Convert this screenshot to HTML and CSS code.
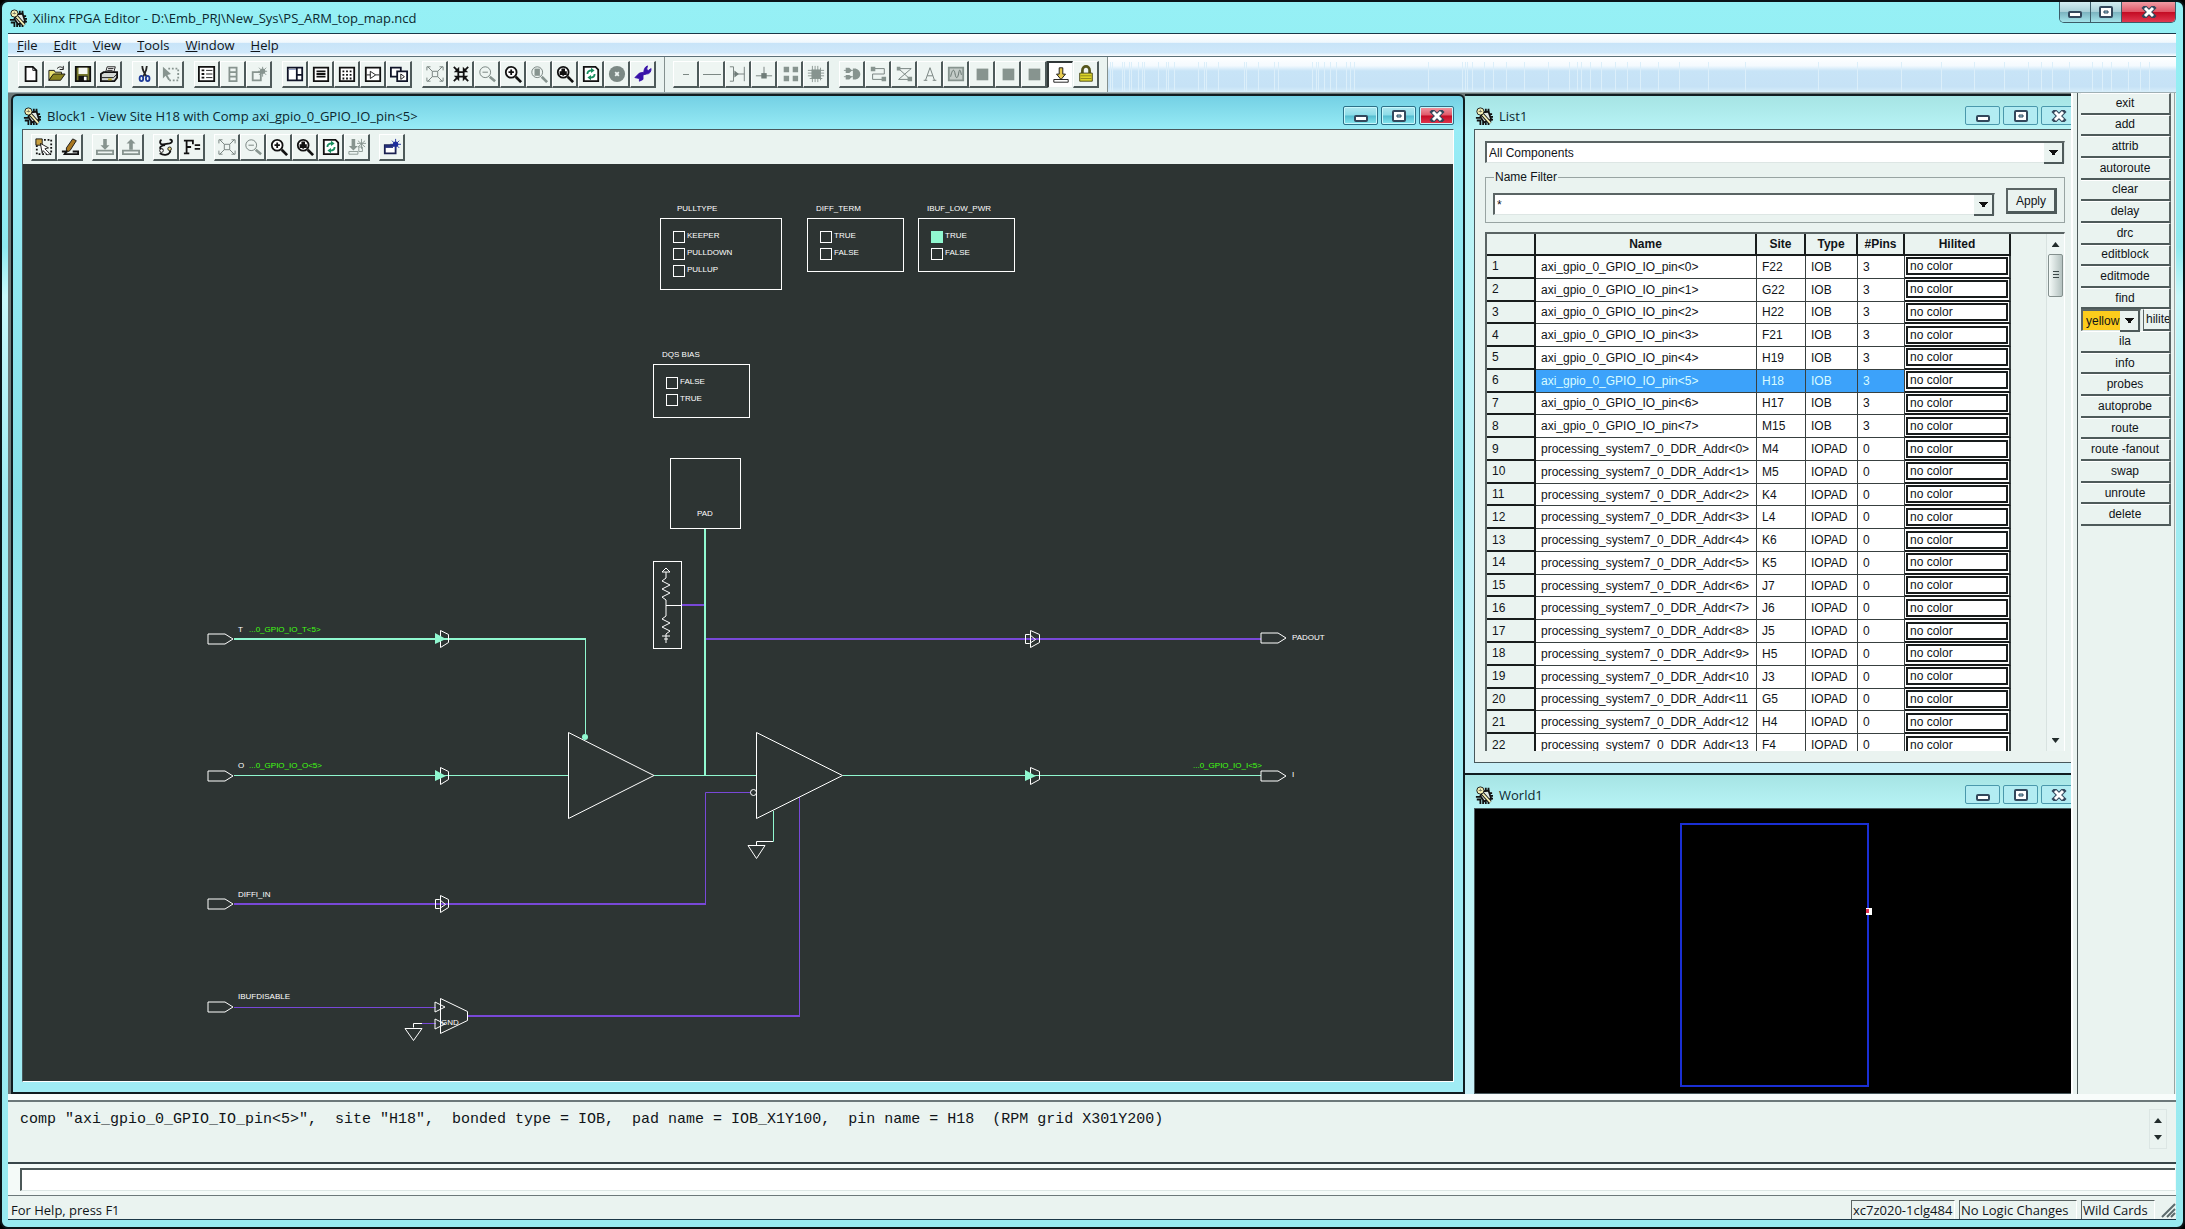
FILE: index.html
```html
<!DOCTYPE html>
<html lang="en">

<head>
    <meta charset="UTF-8">
    <meta name="viewport" content="width=device-width, initial-scale=1.0">
    <title>Xilinx FPGA Editor</title>
    <link rel="stylesheet" href="styles.css">
</head>

<body>

    <!-- Icon set -->
    <svg class="icon-set" aria-hidden="true">
        <symbol id="i-app" viewBox="0 0 20 20">
            <path d="M9 6l6-1 3 9-8 3-4-6z" fill="#dfe8e4" stroke="#111" stroke-width="2"/>
            <path d="M6 20v-4M9 20v-4M12 20v-3M15 20v-4M20 14h-3M20 11h-3M19 8h-3M12 2v4M15 2v4M1 12h5M2 15h5" stroke="#111" fill="none" stroke-width="2"/>
            <path d="M8 8l9 10" stroke="#111" stroke-width="4"/>
            <path d="M8 8l9 10" stroke="#f6f0b4" stroke-width="2"/>
            <circle cx="6" cy="5" r="4" fill="#f6f0b4" stroke="#111"/>
            <path d="M4 5h4M6 3v3" stroke="#776"/>
        </symbol>
        <symbol id="i-new" viewBox="0 0 20 20"><path d="M4 2h8l4 4v12H4z" fill="#fff" stroke="#111" stroke-width="2"/><path d="M12 2v4h4" fill="none" stroke="#111"/></symbol>
        <symbol id="i-open" viewBox="0 0 20 20"><path d="M1 6h6l1 2h7v3H6l-5 6z" fill="#e8e070" stroke="#111"/><path d="M1 17l5-7h13l-5 7z" fill="#8a8420" stroke="#111"/><path d="M10 4c3-3 5-2 7 0M17 1v4h-4" fill="none" stroke="#111"/></symbol>
        <symbol id="i-save" viewBox="0 0 20 20"><path d="M2 2h16v16H2z" fill="#77782c" stroke="#111" stroke-width="2"/><path d="M5 3h10v7H5z" fill="#f4f6f0"/><path d="M5 12h10v6H5z" fill="#111"/><path d="M11 13h3v4h-3z" fill="#fff"/></symbol>
        <symbol id="i-print" viewBox="0 0 20 20"><path d="M6 9l2-7h9l-2 7z" fill="#fff" stroke="#111"/><path d="M9 4h6M8 6h6" stroke="#111"/><path d="M1 10l3-2h15v6l-3 4H1z" fill="#d4d8d4" stroke="#111" stroke-width="2"/><path d="M2 14h13M15 14l4-4" stroke="#111"/><path d="M9 16h4" stroke="#b8a820" stroke-width="2"/></symbol>
        <symbol id="i-cut" viewBox="0 0 20 20"><path d="M7 1c0 5 2 8 5 12M12 1c0 5-2 8-4 12" fill="none" stroke="#222" stroke-width="2"/><ellipse cx="6" cy="15" rx="2" ry="3" fill="none" stroke="#1c3a98" stroke-width="2"/><ellipse cx="13" cy="15" rx="2" ry="3" fill="none" stroke="#1c3a98" stroke-width="2"/></symbol>
        <symbol id="i-pick" viewBox="0 0 20 20"><path d="M7 4h11v13H7" fill="none" stroke="#87948f" stroke-width="2" stroke-dasharray="2 2"/><path d="M1 2l9 8-4 1 3 5-2 1-3-5-3 3z" fill="#87948f"/></symbol>
        <symbol id="i-props" viewBox="0 0 20 20"><path d="M1 2h17v16H1z" fill="#fff" stroke="#111" stroke-width="2"/><path d="M9 6h7M9 10h7M9 14h7" stroke="#111"/><path d="M4 5h3v2H4zM4 9h3v2H4zM4 13h3v2H4z" fill="#111"/></symbol>
        <symbol id="i-stack" viewBox="0 0 20 20"><path d="M6 3h8v5H6zM6 8h8v5H6zM6 13h8v5H6z" fill="none" stroke="#87948f" stroke-width="2"/></symbol>
        <symbol id="i-sparkg" viewBox="0 0 20 20"><path d="M3 8h9v9H3z" fill="none" stroke="#87948f" stroke-width="2"/><path d="M14 2v11M9 7h10M10 3l8 8M18 3l-8 8" stroke="#87948f"/><circle cx="14" cy="7" r="3" fill="#87948f"/></symbol>
        <symbol id="i-spark" viewBox="0 0 20 20"><path d="M2 8h12v9H2z" fill="#fff" stroke="#1a2050" stroke-width="2"/><path d="M2 8h9v3H2z" fill="#24307c"/><path d="M14 1v12M8 7h12M10 3l8 8M18 3l-8 8" stroke="#1c2c9c"/><circle cx="14" cy="7" r="3" fill="#1c2c9c"/></symbol>
        <symbol id="i-pane" viewBox="0 0 20 20"><path d="M2 3h16v14H2z" fill="#fff" stroke="#101428" stroke-width="2"/><path d="M12 3v14M12 11h6" stroke="#101428" stroke-width="2"/><path d="M3 5h8" stroke="#8c9cc4"/></symbol>
        <symbol id="i-lines" viewBox="0 0 20 20"><path d="M2 3h16v15H2z" fill="#fff" stroke="#111" stroke-width="2"/><path d="M5 7h10M5 10h10M5 13h10" stroke="#111" stroke-width="2"/></symbol>
        <symbol id="i-dots" viewBox="0 0 20 20"><path d="M2 3h16v15H2z" fill="#fff" stroke="#111" stroke-width="2"/><path d="M5 7h11M5 11h11M5 15h11" stroke="#111" stroke-width="2" stroke-dasharray="2 2"/></symbol>
        <symbol id="i-gate" viewBox="0 0 20 20"><path d="M2 3h16v15H2z" fill="#fff" stroke="#111" stroke-width="2"/><path d="M7 7l6 4-6 4zM3 11h4M13 11h4" fill="none" stroke="#111"/></symbol>
        <symbol id="i-wins" viewBox="0 0 20 20"><path d="M1 3h11v10H1z" fill="#fff" stroke="#101428" stroke-width="2"/><path d="M8 7h11v11H8z" fill="#fff" stroke="#101428" stroke-width="2"/><path d="M12 10l4 3-4 3z" fill="none" stroke="#111"/></symbol>
        <symbol id="i-fit" viewBox="0 0 20 20"><path d="M7 7h6v6H7zM7 7L2 2M13 7l5-5M7 13l-5 5M13 13l5 5M1 6V2h4M15 2h4v4M1 14v4h4M15 18h4v-4" fill="none" stroke="#6f7c78"/></symbol>
        <symbol id="i-shrink" viewBox="0 0 20 20"><path d="M8 8V2L2 8zM12 8V2l6 6zM8 12v6l-6-6zM12 12v6l6-6z" fill="#111"/><path d="M7 8h6v5H7zM2 2l5 5M18 2l-5 5M2 18l5-5M18 18l-5-5" fill="none" stroke="#111" stroke-width="2"/></symbol>
        <symbol id="i-outg" viewBox="0 0 20 20"><circle cx="8" cy="8" r="6" fill="none" stroke="#6f7c78"/><path d="M5 8h6" stroke="#6f7c78"/><path d="M13 13l6 5" stroke="#87948f" stroke-width="3"/></symbol>
        <symbol id="i-in" viewBox="0 0 20 20"><circle cx="8" cy="8" r="6" fill="#fff" stroke="#111" stroke-width="2"/><path d="M5 8h6M8 5v6" stroke="#111" stroke-width="2"/><path d="M13 13l6 6" stroke="#111" stroke-width="3"/></symbol>
        <symbol id="i-areag" viewBox="0 0 20 20"><circle cx="8" cy="8" r="6" fill="none" stroke="#6f7c78"/><path d="M5 4h6v8H5z" fill="#87948f"/><path d="M13 13l6 6" stroke="#87948f" stroke-width="3"/></symbol>
        <symbol id="i-sel" viewBox="0 0 20 20"><circle cx="8" cy="8" r="6" fill="#fff" stroke="#111" stroke-width="2"/><path d="M4 7h2V4h4v3h2v4h-3v1H7v-1H4z" fill="#111"/><path d="M13 13l6 6" stroke="#111" stroke-width="3"/></symbol>
        <symbol id="i-refresh" viewBox="0 0 20 20"><path d="M2 2h13l3 3v13H2z" fill="#fff" stroke="#111" stroke-width="2"/><path d="M6 10c0-3 2-4 5-4M14 10c0 3-2 4-5 4" fill="none" stroke="#189060" stroke-width="2"/><path d="M10 3l4 3-4 3zM10 11l-4 3 4 3z" fill="#189060"/></symbol>
        <symbol id="i-stop" viewBox="0 0 20 20"><circle cx="10" cy="10" r="9" fill="#7c8985"/><path d="M8 8l4 4M12 8l-4 4" stroke="#eef4f2" stroke-width="2"/></symbol>
        <symbol id="i-wrench" viewBox="0 0 20 20"><path d="M1 14l5-5 5-1c0-3 1-6 4-7l-1 4 2 1 3-2c0 4-2 6-5 6l-4 1v5l-4 2v-3z" fill="#3812a8" stroke="#3812a8"/></symbol>
        <symbol id="i-dash" viewBox="0 0 20 20"><path d="M7 10h6" stroke="#6f7c78" shape-rendering="crispEdges"/></symbol>
        <symbol id="i-line" viewBox="0 0 20 20"><path d="M0 10h20" stroke="#6f7c78" shape-rendering="crispEdges"/></symbol>
        <symbol id="i-pip" viewBox="0 0 20 20"><path d="M1 2h4v16H1M17 2v16M5 10h12" fill="none" stroke="#6f7c78"/><path d="M6 6l5 4-5 4z" fill="#6f7c78"/></symbol>
        <symbol id="i-node" viewBox="0 0 20 20"><path d="M10 2v12M1 12h18" stroke="#6f7c78"/><path d="M7 9h6v6H7z" fill="#6f7c78"/></symbol>
        <symbol id="i-four" viewBox="0 0 20 20"><path d="M3 2h6v6H3zM13 2h6v6h-6zM3 12h6v6H3zM13 12h6v6h-6z" fill="#87948f"/></symbol>
        <symbol id="i-chip" viewBox="0 0 20 20"><path d="M5 5h10v10H5z" fill="#87948f"/><path d="M6 1v18M9 1v18M12 1v18M15 3v14M1 6h18M1 9h18M1 12h18M3 15h14" stroke="#87948f"/></symbol>
        <symbol id="i-logic" viewBox="0 0 20 20"><path d="M11 4h3c7 2 7 11 0 12h-3z" fill="#87948f"/><path d="M1 6h10M1 13h10" stroke="#87948f"/><path d="M3 3h4l3 3-3 3H3zM3 11h4l3 2-3 3H3z" fill="#87948f"/></symbol>
        <symbol id="i-path" viewBox="0 0 20 20"><path d="M4 4h13v6H4v6h12" fill="none" stroke="#6f7c78"/><path d="M2 2h5v5H2zM14 13h5v5h-5z" fill="#87948f"/></symbol>
        <symbol id="i-rats" viewBox="0 0 20 20"><path d="M4 4h14L4 16h14M4 4l13 12" fill="none" stroke="#6f7c78"/><path d="M2 2h4v4H2zM14 13h5v5h-5z" fill="#87948f"/></symbol>
        <symbol id="i-text" viewBox="0 0 20 20"><path d="M5 17L10 3l5 14M7 12h6M3 17h4M13 17h4" fill="none" stroke="#6f7c78"/></symbol>
        <symbol id="i-wave" viewBox="0 0 20 20"><path d="M2 3h16v14H2z" fill="#c4ccc8" stroke="#87948f" stroke-width="2"/><path d="M4 13c2-9 4-9 5-3s3 5 4-1 2-3 3 2" fill="none" stroke="#5f6c68"/></symbol>
        <symbol id="i-block" viewBox="0 0 20 20"><path d="M4 4h13v13H4z" fill="#87948f"/></symbol>
        <symbol id="i-drop" viewBox="0 0 20 20"><path d="M8 2h4v7h3l-5 6-5-6h3z" fill="#e8cc50" stroke="#111"/><path d="M2 15h16v3H2z" fill="#fff" stroke="#111"/></symbol>
        <symbol id="i-lock" viewBox="0 0 20 20"><path d="M6 9V6c0-6 8-6 8 0v3" fill="none" stroke="#55561c" stroke-width="3"/><path d="M3 9h14v9H3z" fill="#dcd428" stroke="#44441a"/><path d="M4 12h12M4 15h12" stroke="#88841c"/></symbol>
        <symbol id="i-select" viewBox="0 0 20 20"><path d="M2 2h16v16H2z" fill="none" stroke="#111" stroke-width="2" stroke-dasharray="2 2"/><path d="M1 1h7v7H1z" fill="#c8a040" stroke="#111"/><path d="M6 6l9 5-4 1 5 5-2 2-5-5-1 3z" fill="#fff" stroke="#111"/></symbol>
        <symbol id="i-pencil" viewBox="0 0 20 20"><path d="M13 1l4 2-7 11-4 2v-5z" fill="#a87820" stroke="#111"/><path d="M1 15h5l-2 3h15v-3h-6" fill="none" stroke="#111" stroke-width="2"/></symbol>
        <symbol id="i-down" viewBox="0 0 20 20"><path d="M8 1h4v7h3l-5 5-5-5h3z" fill="#87948f"/><path d="M1 14h18v4H1z" fill="none" stroke="#87948f" stroke-width="2"/></symbol>
        <symbol id="i-up" viewBox="0 0 20 20"><path d="M8 13h4V6h3l-5-5-5 5h3z" fill="#87948f"/><path d="M1 14h18v4H1z" fill="none" stroke="#87948f" stroke-width="2"/></symbol>
        <symbol id="i-probe" viewBox="0 0 20 20"><path d="M5 2c-3 2-1 6 2 5l7-1c4-1 3-5 0-4M9 8c-7 1-7 5-2 5M3 17c5 3 11 2 12-3" fill="none" stroke="#111" stroke-width="2"/><circle cx="5" cy="14" r="2" fill="#fff" stroke="#111"/><circle cx="14" cy="12" r="2" fill="#e8d880" stroke="#111"/></symbol>
        <symbol id="i-eqn" viewBox="0 0 20 20"><path d="M4 3v14M1 3h10v4M4 10h5M1 17h6" fill="none" stroke="#111" stroke-width="2"/><path d="M13 8h6M13 12h6" stroke="#111" stroke-width="2"/></symbol>
        <symbol id="i-push" viewBox="0 0 20 20"><path d="M4 1h4v8h3l-5 5-5-5h3z" fill="#87948f"/><path d="M1 15h10v3H1zM12 10h4v5h-4z" fill="none" stroke="#87948f"/><path d="M15 1v11M10 6h10M11 3l8 7M19 3l-8 7" stroke="#87948f"/></symbol>
        <symbol id="i-min" viewBox="0 0 16 12"><rect x="2" y="6" width="12" height="5" rx="1" fill="#fff" stroke="#33485c" stroke-width="2"/></symbol>
        <symbol id="i-max" viewBox="0 0 16 12"><rect x="2" y="1" width="12" height="10" rx="1" fill="#fff" stroke="#33485c" stroke-width="2"/><path d="M6 5h4v2H6z" fill="#9cd4e4" stroke="#33485c"/></symbol>
        <symbol id="i-close" viewBox="0 0 16 12"><path d="M4 2l8 8M12 2l-8 8" stroke="#33485c" stroke-width="5" stroke-linecap="square"/><path d="M4 2l8 8M12 2l-8 8" stroke="#fff" stroke-width="3"/></symbol>
        <symbol id="s-port" viewBox="0 0 27 12"><path d="M1 1h17l8 5-8 5H1z" fill="none" stroke="#fff"/></symbol>
    </svg>

    <div class="app">
        <header class="titlebar">
            <svg class="app-icon"><use href="#i-app"/></svg>
            <h1>Xilinx FPGA Editor - D:\Emb_PRJ\New_Sys\PS_ARM_top_map.ncd</h1>
            <div class="caption-main">
                <button type="button" aria-label="Minimize"><svg><use href="#i-min"/></svg></button>
                <button type="button" aria-label="Maximize"><svg><use href="#i-max"/></svg></button>
                <button type="button" class="close" aria-label="Close"><svg><use href="#i-close"/></svg></button>
            </div>
        </header>

        <nav class="menubar">
            <button type="button"><u>F</u>ile</button>
            <button type="button"><u>E</u>dit</button>
            <button type="button"><u>V</u>iew</button>
            <button type="button"><u>T</u>ools</button>
            <button type="button"><u>W</u>indow</button>
            <button type="button"><u>H</u>elp</button>
        </nav>

        <div class="toolbars">
            <div class="toolbar" id="mainTools"></div>
            <div class="toolbar" id="editTools"></div>
            <svg class="streaks" id="streaks" aria-hidden="true"></svg>
        </div>

        <div class="workspace">
            <section class="window active">
                <div class="window-title">
                    <svg class="app-icon"><use href="#i-app"/></svg>
                    <h2>Block1 - View Site H18 with Comp axi_gpio_0_GPIO_IO_pin&lt;5&gt;</h2>
                    <div class="caption">
                        <button type="button" aria-label="Minimize"><svg><use href="#i-min"/></svg></button>
                        <button type="button" aria-label="Maximize"><svg><use href="#i-max"/></svg></button>
                        <button type="button" class="close" aria-label="Close"><svg><use href="#i-close"/></svg></button>
                    </div>
                </div>
                <div class="window-body">
                    <div class="toolbar" id="blockTools"></div>
                    <div class="canvas">
                        <svg class="schematic" width="1430" height="917" viewBox="23 164 1430 917">
                            <!-- nets in use -->
                            <g class="net">
                                <path class="thick" d="M234 639H586M705 529V775"/>
                                <path d="M585.5 639V734M234 775.5H568M654 775.5H756M843 775.5H1261M773.5 811V841.5H757"/>
                            </g>
                            <!-- unused nets -->
                            <g class="idle">
                                <path class="thick" d="M706 639H1261M682 605H704M234 904H706M467 1016H800"/>
                                <path d="M705.5 904V792.5H751M799.5 797V1016M234 1007.5H436M422 1023.5H436"/>
                            </g>
                            <!-- gates, pad and pull resistor -->
                            <g class="part">
                                <rect x="670.5" y="458.5" width="70" height="70"/>
                                <rect x="653.5" y="561.5" width="28" height="87"/>
                                <path d="M568.5 732.5L654 775.5L568.5 818.5z"/>
                                <path d="M756.5 732.5L842.5 775.5L756.5 818.5z"/>
                                <path d="M666 568l4 4h-8zM666 572v6l-4 3 8 4-8 4 8 4-8 4 4 3v16l-4 3 8 4-8 4 8 4-4 3v7M662 636h8M664 639h4M665 642h2M666 605.5h15"/>
                                <path d="M773 841.5h-16.500v4M748 845.5h17l-8.500 13z"/>
                                <path d="M422 1023.5h-8.500v4M405 1028.500h17l-8.500 12z"/>
                                <path d="M440.5 998.5l27 13v9l-27 13z"/>
                                <path d="M435 1002v10l10-5zM435 1019v10l10-5z"/>
                                <circle cx="753.500" cy="792.500" r="3"/>
                            </g>
                            <!-- pin muxes -->
                            <g class="part">
                                <path d="M440.5 630.5l8 4v8l-8 5zM440.5 767.500l8 4v8l-8 5zM440.5 895.500l8 4v8l-8 5z"/>
                                <path d="M1030.500 630.500l9 4v8l-9 5zM1030.500 767.500l9 4v8l-9 5z"/>
                                <path d="M435.500 899.500v9h4l6-4-6-5zM1025.500 634.500v9h4l6-4-6-5z"/>
                            </g>
                            <g class="fill">
                                <path d="M435 633v11l11-5zM435 770v11l11-5zM1025 770v11l11-5z"/>
                                <circle cx="585" cy="737" r="3"/>
                            </g>
                            <use href="#s-port" x="207" y="633" width="27" height="12"/>
                            <use href="#s-port" x="207" y="770" width="27" height="12"/>
                            <use href="#s-port" x="207" y="898" width="27" height="12"/>
                            <use href="#s-port" x="207" y="1001" width="27" height="12"/>
                            <use href="#s-port" x="1260" y="632" width="27" height="12"/>
                            <use href="#s-port" x="1260" y="770" width="27" height="12"/>
                            <g class="tag">
                                <text x="697" y="516">PAD</text>
                                <text x="238" y="632">T</text>
                                <text x="238" y="768">O</text>
                                <text x="238" y="897">DIFFI_IN</text>
                                <text x="238" y="999">IBUFDISABLE</text>
                                <text x="441" y="1025">GND</text>
                                <text x="1292" y="640">PADOUT</text>
                                <text x="1292" y="777">I</text>
                            </g>
                            <g class="tag signal">
                                <text x="249" y="632">...0_GPIO_IO_T&lt;5&gt;</text>
                                <text x="249" y="768">...0_GPIO_IO_O&lt;5&gt;</text>
                                <text x="1193" y="768">...0_GPIO_IO_I&lt;5&gt;</text>
                            </g>
                        </svg>

                        <fieldset class="option pulltype">
                            <legend>PULLTYPE</legend>
                            <label><input type="checkbox">KEEPER</label>
                            <label><input type="checkbox">PULLDOWN</label>
                            <label><input type="checkbox">PULLUP</label>
                        </fieldset>
                        <fieldset class="option diffterm">
                            <legend>DIFF_TERM</legend>
                            <label><input type="checkbox">TRUE</label>
                            <label><input type="checkbox">FALSE</label>
                        </fieldset>
                        <fieldset class="option lowpwr">
                            <legend>IBUF_LOW_PWR</legend>
                            <label><input type="checkbox" checked>TRUE</label>
                            <label><input type="checkbox">FALSE</label>
                        </fieldset>
                        <fieldset class="option dqsbias">
                            <legend>DQS BIAS</legend>
                            <label><input type="checkbox">FALSE</label>
                            <label><input type="checkbox">TRUE</label>
                        </fieldset>
                    </div>
                </div>
            </section>

            <div class="column">
                <section class="window list">
                    <div class="window-title">
                        <svg class="app-icon"><use href="#i-app"/></svg>
                        <h2>List1</h2>
                        <div class="caption">
                            <button type="button" aria-label="Minimize"><svg><use href="#i-min"/></svg></button>
                            <button type="button" aria-label="Maximize"><svg><use href="#i-max"/></svg></button>
                            <button type="button" aria-label="Close"><svg><use href="#i-close"/></svg></button>
                        </div>
                    </div>
                    <div class="window-body">
                        <div class="combo">
                            <select aria-label="List type">
                                <option>All Components</option>
                            </select>
                        </div>
                        <fieldset class="filter">
                            <legend><label for="nameFilter">Name Filter</label></legend>
                            <div class="filter-row">
                                <div class="combo">
                                    <input type="text" id="nameFilter" value="*">
                                </div>
                                <button type="button" class="apply">Apply</button>
                            </div>
                        </fieldset>
                        <div class="grid">
                            <table>
                                <thead>
                                    <tr>
                                        <th class="c-num"></th>
                                        <th class="c-name">Name</th>
                                        <th class="c-site">Site</th>
                                        <th class="c-type">Type</th>
                                        <th class="c-pins">#Pins</th>
                                        <th class="c-color">Hilited</th>
                                    </tr>
                                </thead>
                                <tbody id="rows"></tbody>
                            </table>
                            <div class="scrollbar">
                                <i class="arrow-up"></i>
                                <div class="thumb"></div>
                                <i class="arrow-down"></i>
                            </div>
                        </div>
                    </div>
                </section>

                <section class="window world">
                    <div class="window-title">
                        <svg class="app-icon"><use href="#i-app"/></svg>
                        <h2>World1</h2>
                        <div class="caption">
                            <button type="button" aria-label="Minimize"><svg><use href="#i-min"/></svg></button>
                            <button type="button" aria-label="Maximize"><svg><use href="#i-max"/></svg></button>
                            <button type="button" aria-label="Close"><svg><use href="#i-close"/></svg></button>
                        </div>
                    </div>
                    <div class="window-body">
                        <svg class="device" width="400" height="284">
                            <rect x="206" y="15" width="187" height="262" fill="none" stroke="#1a2fd4" stroke-width="2"/>
                            <rect x="391" y="99" width="6" height="7" fill="#fff"/>
                            <rect x="391" y="100" width="3" height="4" fill="#e03050"/>
                        </svg>
                    </div>
                </section>
            </div>

            <aside class="commands">
                <div class="command-list">
                    <button type="button">exit</button>
                    <button type="button">add</button>
                    <button type="button">attrib</button>
                    <button type="button">autoroute</button>
                    <button type="button">clear</button>
                    <button type="button">delay</button>
                    <button type="button">drc</button>
                    <button type="button">editblock</button>
                    <button type="button">editmode</button>
                    <button type="button">find</button>
                    <div class="hilite">
                        <div class="combo">
                            <select aria-label="Hilite color">
                                <option>yellow</option>
                            </select>
                        </div>
                        <button type="button">hilite</button>
                    </div>
                    <button type="button">ila</button>
                    <button type="button">info</button>
                    <button type="button">probes</button>
                    <button type="button">autoprobe</button>
                    <button type="button">route</button>
                    <button type="button">route -fanout</button>
                    <button type="button">swap</button>
                    <button type="button">unroute</button>
                    <button type="button">delete</button>
                </div>
            </aside>
        </div>

        <div class="output">
            <pre>comp "axi_gpio_0_GPIO_IO_pin&lt;5&gt;",  site "H18",  bonded type = IOB,  pad name = IOB_X1Y100,  pin name = H18  (RPM grid X301Y200)</pre>
            <div class="spin">
                <i class="arrow-up"></i>
                <i class="arrow-down"></i>
            </div>
        </div>

        <div class="entry">
            <input type="text" aria-label="Command">
        </div>

        <footer class="status">
            <span class="help">For Help, press F1</span>
            <span class="pane device-name">xc7z020-1clg484</span>
            <span class="pane changes">No Logic Changes</span>
            <span class="pane wild">Wild Cards</span>
            <svg class="grip" width="16" height="16"><path d="M2 15L15 2M7 15l8-8M11 15l4-4" stroke="#5c6a6c" stroke-width="2"/></svg>
        </footer>
    </div>

    <script src="script.js"></script>
</body>

</html>
```

FILE: script.js
```js
// Toolbar layout: each inner list is one group of buttons
const mainTools = [
    ["new", "open", "save", "print"],
    ["cut", "pick"],
    ["props", "stack", "sparkg"],
    ["pane", "lines", "dots", "gate", "wins"],
    ["fit", "shrink", "outg", "in", "areag", "sel", "refresh", "stop", "wrench"]
];
const editTools = [
    ["dash", "line", "pip", "node", "four", "chip"],
    ["logic", "path", "rats", "text", "wave", "block", "block", "block", "drop", "lock"]
];
const blockTools = [
    ["select", "pencil"],
    ["down", "up"],
    ["probe", "eqn"],
    ["fit", "outg", "in", "sel", "refresh", "push"],
    ["spark"]
];

function fillToolbar(id, groups) {
    document.getElementById(id).innerHTML = groups.map(group =>
        `<div class="group">${group.map(name =>
            `<button type="button" class="tool${name === "drop" ? " pressed" : ""}" aria-label="${name}"><svg><use href="#i-${name}"/></svg></button>`
        ).join("")}</div>`
    ).join("");
}

fillToolbar("mainTools", mainTools);
fillToolbar("editTools", editTools);
fillToolbar("blockTools", blockTools);

// Component list: name, site, type and number of pins
const ioSites = ["F22", "G22", "H22", "F21", "H19", "H18", "H17", "M15"];
const ddrSites = ["M4", "M5", "K4", "L4", "K6", "K5", "J7", "J6", "J5", "H5", "J3", "G5", "H4", "F4"];
const parts = [
    ...ioSites.map((site, i) => [`axi_gpio_0_GPIO_IO_pin<${i}>`, site, "IOB", 3]),
    ...ddrSites.map((site, i) => [`processing_system7_0_DDR_Addr<${i}${i < 10 ? ">" : ""}`, site, "IOPAD", 0])
];
const escape = text => text.replace(/</g, "&lt;").replace(/>/g, "&gt;");

document.getElementById("rows").innerHTML = parts.map((part, i) => `
    <tr${i === 5 ? ' class="selected"' : ""}>
        <th>${i + 1}</th>
        <td>${escape(part[0])}</td><td>${part[1]}</td><td>${part[2]}</td><td>${part[3]}</td>
        <td class="color"><span>no color</span></td>
    </tr>`).join("");

// Light streaks on the empty part of the toolbar
const streaks = [2, 4, 14, 16, 21, 23, 30, 34, 36, 50, 58, 60, 66, 90, 96, 98, 110, 136, 138, 150, 166, 170,
    204, 208, 210, 216, 222, 228, 238, 242, 246, 320, 354, 357, 359, 364, 376, 385, 398, 416, 440, 461, 469,
    473, 482, 493, 507, 519, 532, 550, 571, 600, 637, 710, 749, 793, 833, 866, 896, 920, 933, 944, 961, 984,
    994, 1003, 1020, 1032, 1041];
document.getElementById("streaks").innerHTML = streaks.map(x =>
    `<rect x="${x}" y="5" width="1" height="29" fill="#dceffa"/>`).join("");
```

FILE: styles.css
```css
* {
    box-sizing: border-box;
}

body {
    margin: 0;
    height: 100vh;
    background: #000;
    font-family: "Liberation Sans", Arial, sans-serif;
    font-size: 12px;
    line-height: 14px;
    color: #101418;
}

button,
input,
select {
    font: inherit;
    color: inherit;
    margin: 0;
    padding: 0;
    border: none;
    border-radius: 0;
    background: none;
}

h1,
h2,
pre {
    margin: 0;
    font-weight: normal;
}

svg {
    display: block;
}

.icon-set {
    position: absolute;
    width: 0;
    height: 0;
}

.app {
    display: flex;
    flex-direction: column;
    height: 100vh;
    border: 2px solid #0a1418;
    border-radius: 8px;
    padding: 0 7px 7px 6px;
    background: linear-gradient(#96f0f5, #8eeaf0 20%, #c8f8fa 24%, #a0ecf2 40%, #98eaf0);
}

/* Title bar and menu */
.titlebar {
    display: flex;
    align-items: center;
    height: 31px;
    flex: none;
}

.titlebar h1,
.window-title h2 {
    flex: 1;
    font-family: "Open Sans", "Noto Sans", sans-serif;
    font-size: 13px;
    line-height: 18px;
    color: #0c2830;
}

.app-icon {
    width: 18px;
    height: 18px;
    margin: 0 6px 0 1px;
}

.caption-main {
    display: flex;
    align-self: flex-start;
    border: 1px solid #3c5c68;
    border-top: none;
    border-radius: 0 0 5px 5px;
    overflow: hidden;
}

.caption-main button {
    width: 31px;
    height: 20px;
    border-right: 1px solid #3c5c68;
    background: linear-gradient(#d4eef2, #a8d0d8 48%, #7cb4c0 52%, #a4e4ea);
}

.caption-main button.close {
    width: 53px;
    border-right: none;
}

.caption-main svg,
.caption svg {
    width: 16px;
    height: 12px;
    margin: auto;
}

.caption-main button.close,
.active .caption button.close {
    background: linear-gradient(#f09ca4, #e05868 48%, #c40c24 52%, #e03850);
}

.menubar {
    display: flex;
    height: 24px;
    flex: none;
    padding-left: 1px;
    border-top: 1px solid #1c3848;
    border-bottom: 1px solid #5c7078;
    background: linear-gradient(#fff, #f0f8fd 38%, #c8e4f8 42%, #cfe8fa 85%, #fff);
}

.menubar button {
    padding: 0 8px;
    font-family: "Open Sans", "Noto Sans", sans-serif;
    font-size: 13px;
}

/* Toolbars */
.toolbars {
    display: flex;
    height: 36px;
    flex: none;
    background: linear-gradient(#fff, #f4fafe 25%, #c8e4f7 40%, #c6e2f6 85%, #d8eefa);
    border-bottom: 1px solid #a0b0b4;
}

.toolbar {
    display: flex;
    flex: none;
    align-items: center;
    gap: 10px;
    padding: 0 8px;
    background: #eaf3f0;
}

.toolbars .toolbar {
    padding: 0 8px 0 10px;
    border-right: 1px solid #84908e;
}

.toolbars #editTools {
    padding: 0 8px;
}

.group {
    display: flex;
}

.tool {
    width: 26px;
    height: 27px;
    padding: 3px 2px;
    background: #eef5f2;
    border: 1px solid #fff;
    border-right: 2px solid #4e5a5a;
    border-bottom: 2px solid #4e5a5a;
}

.tool svg {
    width: 20px;
    height: 18px;
}

.tool.pressed {
    background: #fff;
    border: 1px solid #e8f0ee;
    border-top: 2px solid #303838;
    border-left: 2px solid #303838;
}

.streaks {
    flex: 1;
    height: 35px;
    min-width: 0;
}

/* Child windows */
.workspace {
    display: flex;
    flex: 1;
    min-height: 0;
    padding: 1px 0 0 3px;
    background: #6c7878;
}

.window {
    display: flex;
    flex-direction: column;
    min-width: 0;
    min-height: 0;
    border-top: 2px solid #101c20;
    padding: 0 10px 10px 9px;
    background: linear-gradient(#a6e4e4, #b8f4f6 34px, #c8f0f8);
}

.window.active {
    flex: 1;
    border: 2px solid #101c20;
    border-radius: 6px 6px 0 0;
    padding: 0 9px 10px;
    background: linear-gradient(#74d0e4, #98ecf6 34px, #84e0e8 40%, #a0ecf4 60%);
}

.window-title {
    display: flex;
    align-items: center;
    height: 33px;
    flex: none;
    padding-top: 6px;
}

.active .app-icon {
    margin-left: 1px;
}

.caption {
    display: flex;
    gap: 3px;
}

.caption button {
    width: 35px;
    height: 19px;
    border: 1px solid #4a98ac;
    border-radius: 2px;
    background: #b2ecf2;
}

.active .caption button {
    border-color: #2c7088;
    box-shadow: inset 0 0 0 1px #c8f8fc;
    background: linear-gradient(#b0e8f0, #8cdce8 48%, #54bcd0 52%, #88e8f0);
}

.window-body {
    display: flex;
    flex-direction: column;
    flex: 1;
    min-height: 0;
    border: 1px solid #48585c;
    background: #eaf3f0;
}

.active .window-body {
    border-right-color: #fff;
    border-bottom-color: #fff;
}

.active .toolbar {
    height: 34px;
    gap: 9px;
}

.column {
    display: grid;
    grid-template-rows: minmax(0, 679fr) minmax(0, 321fr);
    width: 606px;
    flex: none;
    overflow: hidden;
    background: #101c20;
}

/* The windows in the column run on under the command panel */
.column .window {
    width: calc(100% + 15px);
}

.window.world {
    padding-bottom: 0;
}

.list .window-body {
    padding: 11px 10px;
}

.world .window-body {
    background: #000;
}

/* Schematic */
.canvas {
    position: relative;
    flex: 1;
    min-height: 0;
    overflow: hidden;
    background: #2d3433;
}

.schematic path,
.schematic rect {
    fill: none;
}

.schematic .net {
    stroke: #90f8d0;
}

.schematic .idle {
    stroke: #7848d8;
}

.schematic .thick {
    stroke-width: 2;
}

.schematic .part {
    stroke: #fff;
    fill: none;
}

.schematic .fill path,
.schematic .fill circle {
    fill: #90f8d0;
}

.tag text {
    font-size: 8px;
    fill: #fff;
}

.signal text {
    fill: #40ff10;
}

.option {
    position: absolute;
    margin: 0;
    padding: 12px;
    border: 1px solid #fff;
    color: #fff;
    font-size: 8px;
}

.option legend {
    position: absolute;
    top: -17px;
    left: 8px;
    padding: 0;
}

.option label {
    display: flex;
    gap: 2px;
    height: 17px;
    line-height: 10px;
}

.option input {
    appearance: none;
    width: 12px;
    height: 12px;
    border: 1px solid #fff;
}

.option input:checked {
    background: #90f8d0;
    border-color: #90f8d0;
}

.pulltype {
    left: 637px;
    top: 54px;
    width: 122px;
    height: 72px;
}

.pulltype legend {
    left: 16px;
}

.diffterm,
.lowpwr,
.dqsbias {
    width: 97px;
    height: 54px;
}

.diffterm {
    left: 784px;
    top: 54px;
}

.lowpwr {
    left: 895px;
    top: 54px;
}

.dqsbias {
    left: 630px;
    top: 200px;
}

/* List window */
.combo {
    position: relative;
    height: 22px;
    border: 2px solid #5a6464;
    border-right: 1px solid #dde6e4;
    border-bottom: 1px solid #dde6e4;
    background: #fff;
}

.combo select,
.combo input {
    display: block;
    appearance: none;
    width: 100%;
    height: 100%;
    padding-left: 2px;
    outline: none;
}

.combo::after {
    content: "";
    position: absolute;
    top: 0;
    right: 0;
    width: 18px;
    height: 100%;
    border-right: 2px solid #4e5a5a;
    border-bottom: 2px solid #4e5a5a;
    background: linear-gradient(#111, #111) 5px 7px / 9px 1px no-repeat, linear-gradient(#111, #111) 6px 8px / 7px 1px no-repeat, linear-gradient(#111, #111) 7px 9px / 5px 1px no-repeat, linear-gradient(#111, #111) 8px 10px / 3px 2px no-repeat, #eaf3f0;
    pointer-events: none;
}

.filter {
    margin: 7px 0 9px;
    padding: 4px 7px 7px;
    border: 1px solid #98a4a2;
    min-width: 0;
}

.filter legend {
    height: 14px;
    margin-left: 1px;
    padding: 0 1px;
}

.filter-row {
    display: flex;
    align-items: flex-end;
    gap: 11px;
    height: 27px;
}

.filter-row .combo {
    flex: 1;
}

.apply {
    align-self: flex-start;
    width: 51px;
    height: 26px;
    border: 2px solid #5a6464;
    border-right: 3px solid #4e5a5a;
    border-bottom: 3px solid #4e5a5a;
}

.grid {
    display: flex;
    justify-content: space-between;
    flex: 1;
    min-height: 0;
    overflow: hidden;
    border-top: 2px solid #5a6464;
    border-left: 2px solid #5a6464;
    border-right: 1px solid #fff;
}

.grid table {
    flex: none;
    width: 524px;
    height: 523px;
    table-layout: fixed;
    border-collapse: separate;
    border-spacing: 0;
    background: #fff;
}

.grid th,
.grid td {
    padding: 0 5px;
    overflow: hidden;
    white-space: nowrap;
    text-align: left;
    border-right: 1px solid #384040;
    border-bottom: 1px solid #384040;
}

.grid th {
    background: #eaf3f0;
    border-right: 2px solid #181c1c;
    border-bottom: 2px solid #181c1c;
}

.grid thead th {
    height: 22px;
    text-align: center;
}

.grid tbody th {
    font-weight: normal;
}

.c-num {
    width: 49px;
}

.c-name {
    width: 221px;
}

.c-site {
    width: 49px;
}

.c-type {
    width: 52px;
}

.c-pins {
    width: 47px;
}

.grid td.color {
    padding: 1px;
    border-bottom: 2px solid #181c1c;
    border-right: 2px solid #384040;
}

.color span {
    display: block;
    height: 18px;
    padding-left: 2px;
    line-height: 14px;
    border: 2px solid #181c1c;
}

.selected td {
    background: #3ca2fa;
    color: #d8fcff;
}

.selected td.color {
    background: #fff;
    color: #101418;
}

.scrollbar {
    display: flex;
    flex-direction: column;
    align-items: center;
    width: 18px;
    padding: 8px 0;
    border-left: 1px solid #d8e2e0;
    background: #edf5f3;
}

.arrow-up,
.arrow-down {
    width: 8px;
    height: 5px;
    background: #222c2c;
    clip-path: polygon(50% 0, 100% 100%, 0 100%);
}

.arrow-down {
    clip-path: polygon(0 0, 100% 0, 50% 100%);
}

.thumb {
    width: 15px;
    height: 43px;
    margin: 7px 0 auto;
    border: 1px solid #84908e;
    border-radius: 2px;
    background: linear-gradient(#3c4848, #3c4848) 4px 16px / 6px 1px no-repeat, linear-gradient(#3c4848, #3c4848) 4px 19px / 6px 1px no-repeat, linear-gradient(#3c4848, #3c4848) 4px 22px / 6px 1px no-repeat, linear-gradient(90deg, #f4faf8, #b4c2c0);
}

/* Command panel */
.commands {
    display: flex;
    width: 105px;
    flex: none;
    margin-top: -1px;
    padding: 0 1px 0 4px;
    border-left: 2px solid #fff;
    background: #eaf3f0;
}

.command-list {
    flex: 1;
    min-width: 0;
    padding: 0 3px 568px 3px;
    border-left: 1px solid #4e5a5a;
    border-right: 1px solid #98a4a2;
    display: grid;
    grid-template-columns: minmax(0, 1fr);
    grid-template-rows: repeat(20, minmax(0, 1fr));
    align-content: start;
}

.command-list button {
    width: 100%;
    padding-bottom: 1px;
    white-space: nowrap;
    border-top: 1px solid #fff;
    border-right: 2px solid #5a6464;
    border-bottom: 2px solid #4e5a5a;
}

.hilite {
    display: flex;
    gap: 2px;
}

.hilite .combo {
    width: 60px;
    height: auto;
    flex: none;
}

.hilite select {
    padding-left: 3px;
    background: #fccc1c;
}

.hilite button {
    flex: 1;
    min-width: 0;
    overflow: hidden;
    padding-left: 2px;
    text-align: left;
    border-left: 1px solid #5a6464;
}

/* Output, command entry and status bar */
.output {
    display: flex;
    justify-content: space-between;
    height: 70px;
    flex: none;
    padding: 0 9px 0 12px;
    border-top: 6px solid #f8fcfb;
    border-bottom: 2px solid #38464a;
    background: #eaf3f0;
    box-shadow: inset 0 2px #6c787a;
}

.output pre {
    padding-top: 11px;
    font-family: "Liberation Mono", "Courier New", monospace;
    font-size: 15px;
    line-height: 18px;
}

.spin {
    display: flex;
    flex-direction: column;
    justify-content: space-between;
    align-items: center;
    width: 18px;
    height: 40px;
    margin-top: 9px;
    padding: 8px 0;
    border: 1px solid #dce6e4;
}

.entry {
    height: 32px;
    flex: none;
    padding: 4px 1px 5px 12px;
    background: #f4faf8;
    border-bottom: 1px solid #6c787a;
}

.entry input {
    display: block;
    width: 100%;
    height: 23px;
    border: 2px solid #4c5858;
    border-right: none;
    border-bottom: 1px solid #dce6e4;
    background: #fff;
    padding: 0 4px;
}

.status {
    display: flex;
    align-items: center;
    height: 24px;
    flex: none;
    gap: 4px;
    padding: 4px 0 0 3px;
    background: #eaf3f0;
    border-bottom: 1px solid #1c3848;
    font-family: "Open Sans", "Noto Sans", sans-serif;
    font-size: 13px;
    line-height: 18px;
}

.help {
    flex: 1;
}

.pane {
    height: 19px;
    padding-left: 1px;
    white-space: nowrap;
    border-top: 1px solid #5a6464;
    border-left: 1px solid #5a6464;
    border-right: 1px solid #fff;
}

.device-name {
    width: 104px;
}

.changes {
    width: 118px;
}

.wild {
    width: 74px;
}

.grip {
    margin-left: 1px;
}
```
